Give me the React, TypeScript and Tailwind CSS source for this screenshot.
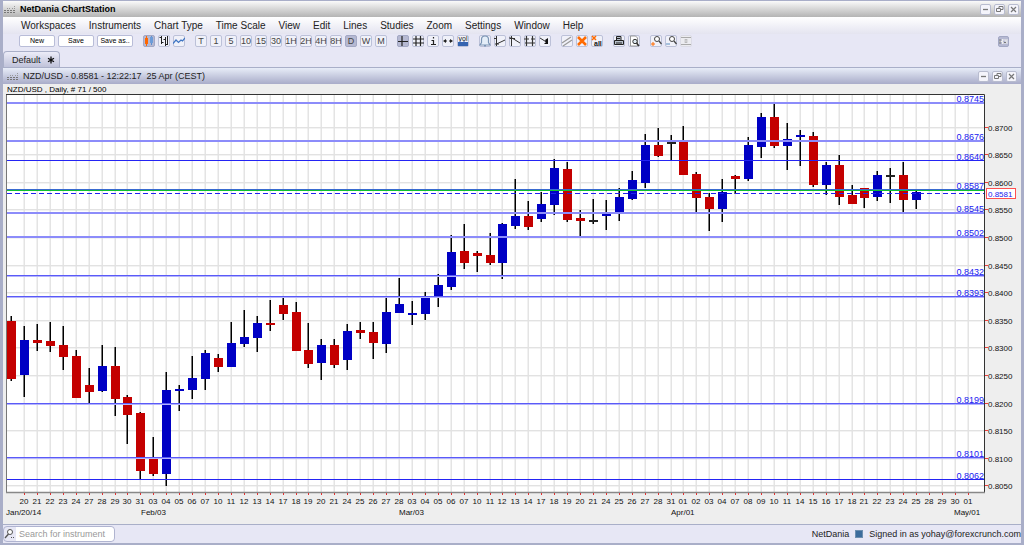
import React from "react";

type Kind = "r" | "b" | "k";
// kind, high, body top, body bottom, low (chart units)
type Candle = [Kind, number, number, number, number];

const candles: Candle[] = [
  ["r", 316, 321, 379, 381], ["b", 326, 340, 375, 397], ["r", 324, 340, 343, 351], ["r", 322, 341, 346, 352],
  ["r", 326, 345, 357, 370], ["r", 350, 356, 398, 398], ["r", 368, 385, 392, 405], ["b", 345, 366, 391, 392],
  ["r", 347, 366, 399, 416], ["r", 395, 397, 415, 444], ["r", 412, 413, 471, 479], ["r", 437, 457, 474, 476],
  ["b", 372, 390, 474, 486], ["b", 385, 389, 391, 411], ["b", 356, 378, 390, 399], ["b", 350, 353, 379, 390],
  ["r", 354, 358, 367, 372], ["b", 322, 343, 367, 367], ["b", 310, 337, 344, 347], ["b", 316, 323, 338, 352],
  ["r", 300, 323, 325, 331], ["r", 297, 305, 314, 320], ["r", 302, 312, 351, 351], ["r", 323, 350, 364, 368],
  ["b", 339, 345, 363, 380], ["r", 339, 345, 365, 368], ["b", 324, 331, 360, 370], ["r", 322, 330, 333, 339],
  ["r", 322, 332, 343, 359], ["b", 297, 312, 344, 353], ["b", 278, 304, 313, 313], ["b", 301, 313, 315, 325],
  ["b", 292, 296, 314, 320], ["b", 274, 285, 298, 307], ["b", 235, 252, 287, 290], ["r", 224, 251, 263, 269],
  ["r", 251, 253, 256, 272], ["r", 233, 255, 263, 265], ["b", 223, 224, 263, 279], ["b", 179, 216, 226, 229],
  ["r", 201, 216, 227, 230], ["b", 192, 204, 219, 222], ["b", 159, 168, 205, 215], ["r", 162, 169, 220, 222],
  ["r", 210, 218, 221, 238], ["k", 199, 220, 222, 224], ["b", 200, 213, 216, 230], ["b", 188, 197, 214, 221],
  ["b", 171, 180, 199, 200], ["b", 134, 145, 183, 188], ["r", 128, 145, 156, 157], ["k", 135, 142, 144, 160],
  ["r", 126, 142, 175, 175], ["r", 172, 174, 198, 213], ["r", 193, 197, 209, 231], ["b", 179, 192, 209, 222],
  ["r", 175, 176, 179, 194], ["b", 137, 145, 179, 181], ["b", 113, 117, 147, 158], ["r", 102, 117, 146, 148],
  ["b", 123, 139, 146, 170], ["b", 130, 135, 137, 166], ["r", 132, 136, 185, 187], ["b", 162, 165, 185, 195],
  ["r", 155, 165, 197, 205], ["r", 185, 195, 204, 204], ["r", 188, 188, 198, 208], ["b", 171, 175, 197, 201],
  ["k", 168, 175, 177, 203], ["r", 162, 175, 200, 213], ["b", 190, 192, 200, 209],
];

const days =
  "20 21 22 23 24 27 28 29 30 31 03 04 05 06 07 10 11 12 13 14 17 18 19 20 21 24 25 26 27 28 03 04 05 06 07 10 11 12 13 14 17 18 19 20 21 24 25 26 27 28 31 01 02 03 04 07 08 09 10 11 14 15 16 17 18 21 22 23 24 25 28 29 30 01".split(
    " ",
  );

const ticks = [8700, 8650, 8600, 8550, 8500, 8450, 8400, 8350, 8300, 8250, 8200, 8150, 8100, 8050];
// price and how the line is weighted over its two pixel rows
const levels: [number, "wide" | "mid" | "thin"][] = [
  [8745, "wide"], [8676, "wide"], [8640, "thin"], [8587, "mid"], [8545, "wide"], [8502, "wide"],
  [8432, "mid"], [8393, "mid"], [8199, "mid"], [8101, "mid"], [8062, "thin"],
];
const weights = {
  wide: ["#8c8cfa", "#8c8cfa"],
  mid: ["#5a5af8", "#b4b4fc"],
  thin: ["#2424f4", "none"],
};
const months: [number, string][] = [[6, "Jan/20/14"], [141, "Feb/03"], [399, "Mar/03"], [671, "Apr/01"], [954, "May/01"]];

const fills = { r: "#c40000", b: "#0000c4", k: "#222222" };
const xAt = (i: number) => Math.round(11.1 + i * 12.93);
const yAt = (p: number) => 127.5 + (8700 - p) * 0.5523;
const lineY = (p: number) => Math.floor(yAt(p) - 0.5);
const price = (p: number) => "0." + p;

function Chart() {
  return (
    <svg viewBox="3 94 1018 430" className="block h-auto w-full font-['Liberation_Sans',Arial,sans-serif]" role="img" aria-label="NZD/USD daily candlestick chart">
      <rect x="7" y="94" width="978" height="399" fill="#fff" />
      {days.map((_, i) => (
        <rect key={i} x={xAt(i + 1) - 0.5} y="95" width="1.5" height="398" fill="#e4e4e4" />
      ))}
      {ticks.map((p) => (
        <rect key={p} x="7" y={Math.round(yAt(p)) - 1} width="977" height="1.4" fill="#e2e2e2" />
      ))}
      {candles.map(([k, h, t, b, l], i) => (
        <g key={i}>
          <rect x={xAt(i) - 0.5} y={h} width="1.5" height={l - h} fill="#000" />
          <rect x={i ? xAt(i) - 4 : 7} y={t} width="9" height={b - t} fill={fills[k]} />
        </g>
      ))}
      {levels.map(([p, w]) => (
        <g key={p}>
          <rect x="7" y={lineY(p)} width="977" height="1" fill={weights[w][0]} />
          <rect x="7" y={lineY(p) + 1} width="977" height="1" fill={weights[w][1]} />
          <text x="984" y={lineY(p)} textAnchor="end" fontSize="9" fill="#2020f0">{price(p)}</text>
        </g>
      ))}
      <rect x="7" y="189" width="977" height="1" fill="#3a6ad0" />
      <rect x="7" y="190" width="977" height="1" fill="#10c030" />
      <path d="M7 193.5H984" stroke="#2020f0" strokeDasharray="5 3" />
      <path d="M6.5 94V493" stroke="#777" />
      <path d="M6 94.5H984.5V493" fill="none" stroke="#333" />
      <path d="M6 492.5H985" stroke="#888" strokeWidth="1.5" />
      {ticks.map((p) => (
        <g key={p}>
          <rect x="985" y={Math.round(yAt(p)) - 1} width="3" height="1" fill="#f04040" />
          <text x="988" y={Math.round(yAt(p)) + 3} fontSize="8" fill="#111">{price(p)}</text>
        </g>
      ))}
      <rect x="986.5" y="188.500" width="29" height="10" fill="#fff" stroke="#ff5050" />
      <text x="988" y="197" fontSize="8" fill="#2020f0">0.8581</text>
      {days.map((d, i) => (
        <g key={i}>
          <rect x={xAt(i + 1)} y="493" width="1" height="2" fill="#e03030" />
          <text x={xAt(i + 1)} y="504" textAnchor="middle" fontSize="8" fill="#111">{d}</text>
        </g>
      ))}
      {months.map(([x, m]) => (
        <text key={m} x={x} y="515" fontSize="8" fill="#111">{m}</text>
      ))}
    </svg>
  );
}

type IconDef = { label: string; art: React.ReactNode; on?: boolean; dim?: boolean };

const K = "#333";
const chartTypes: IconDef[] = [
  { label: "Candles", on: true, art: <><path d="M3.5 1v10" stroke="#f60" /><path d="M2 3h3v6H2z" fill="#f60" /><path d="M8.5 1v9" stroke="#5b8fd0" /><path d="M7 2h3v6H7z" fill="#6d9cd8" /></> },
  { label: "Bars", art: <path d="M3.5 1v8M1.5 2.5h2M3.5 7.5h2M7.5 2v9M5.5 4.5h2M7.5 9.5h2M9.500 1v9" stroke="#222" fill="none" /> },
  { label: "Line", art: <path d="M0 8.500L3 5l2.500 2.500L8 5l1.500 1L12 3" stroke="#3f76c4" strokeWidth="1.200" fill="none" /> },
];
const frames = ["T", "1", "5", "10", "15", "30", "1H", "2H", "4H", "8H", "D", "W", "M"];
const view: IconDef[] = [
  { label: "Crosshair", on: true, art: <path d="M5 1v10M1 6.500h10" stroke="#222" strokeWidth="1.200" /> },
  { label: "Grid", art: <path d="M4 1v10M8.500 1v10M1 4h11M1 8h11" stroke="#222" strokeWidth="1.200" /> },
  { label: "Info", art: <path d="M6.500 2v1.500M4.500 5.500h2V9.500M4 9.500h5" stroke="#222" strokeWidth="1.200" fill="none" /> },
  { label: "Expand", art: <path d="M1 6l3-2v1.500h1v1H4V8zM11 6L8 4v1.500H7v1h1V8z" fill="#222" /> },
  { label: "Volume", art: <><rect x="1" y="7" width="10" height="4" fill="#3564b0" /><path d="M3 7V6M5 8V7M7 7V6" stroke="#3564b0" /><text x="6" y="6" fontSize="7" textAnchor="middle" fill="#111">vol</text></> },
];
const draw: IconDef[] = [
  { label: "Alert", art: <path d="M1 10h10L9.500 7.500V4.500Q9.500 1 6 1T2.500 4.500v3zM5 11h2" stroke="#7a94b4" strokeWidth="1.200" fill="#e4eef8" /> },
  { label: "Trend up", art: <path d="M2.500 1v10M0 3.500h2.500M2.500 9L11 5M1 9h4" stroke={K} fill="none" /> },
  { label: "Trend down", art: <path d="M2.500 1v10M0 3h3L11 8M1 3.500h5" stroke={K} fill="none" /> },
  { label: "Channel", art: <path d="M2.500 1v10M8.500 1v10M0 4h5M1 8h10M7 4h4" stroke={K} strokeWidth="1.200" /> },
  { label: "Arrow", art: <><path d="M1 3l8 5" stroke={K} /><path d="M9 3v6H5l2-2-1-2z" fill="#111" /></> },
];
const lines: IconDef[] = [
  { label: "Parallel lines", art: <path d="M1 8L10 2M2 11l9-6" stroke="#999" strokeWidth="1.200" /> },
  { label: "Delete line", art: <path d="M2 2l8 8M10 2L2 10" stroke="#ff6a00" strokeWidth="2.500" /> },
  { label: "Delete all", art: <><path d="M1 1l4 4M5 1L1 5" stroke="#ff6a00" strokeWidth="1.500" /><text x="3" y="11" fontSize="7" fontWeight="bold" fill="#111">all</text></> },
];
const print: IconDef[] = [
  { label: "Print", art: <path d="M3.500 5V1.500h4.500V5M1.500 5.500h9v4h-9zM3 8h6M4 3.500h3" stroke="#222" fill="#b9c2cc" /> },
  { label: "Print preview", art: <><path d="M2.500 1h5l2 2v8h-7z" fill="#fff" stroke="#999" /><circle cx="7" cy="6.500" r="2.200" fill="#dde8f0" stroke="#333" /><path d="M8.500 8L11 11" stroke="#333" strokeWidth="1.500" /></> },
];
const zooms: IconDef[] = [
  { label: "Zoom in", art: <><circle cx="7" cy="4" r="2.500" fill="#fff" stroke="#444" /><path d="M9 6l2.500 3" stroke="#444" strokeWidth="1.300" /><path d="M1 9h4M3 7v4" stroke="#ff6a00" /></> },
  { label: "Zoom out", art: <><circle cx="7" cy="4" r="2.500" fill="#fff" stroke="#444" /><path d="M9 6l2.500 3" stroke="#444" strokeWidth="1.300" /><path d="M1 9h4" stroke="#5c8fc0" /></> },
  { label: "Fit height", dim: true, art: <path d="M1 2.500h10M1 9.500h10M6 4v1M6 7v1M4.500 5h3M4.500 7h3" stroke="#aaa" fill="none" /> },
];

function IconGroup({ items }: { items: IconDef[] }) {
  return (
    <div className="flex gap-[3px]">
      {items.map((it) => (
        <button
          key={it.label}
          type="button"
          aria-label={it.label}
          className={
            "flex size-3 items-center justify-center rounded-xs border " +
            (it.on ? "border-[#a3a8c4] bg-[#b6b9d2]" : it.dim ? "border-[#dcdce6] bg-[#ececf0]" : "border-[#bcc1d8] bg-[#f0f1f9]")
          }
        >
          <svg viewBox="0 0 12 12" className="size-3 shrink-0">{it.art}</svg>
        </button>
      ))}
    </div>
  );
}

const boxes = [
  { label: "Minimize", art: <path d="M3 5.500h5" stroke="#777" strokeWidth="1.300" /> },
  { label: "Restore", art: <path d="M5 4.500V2.500h4v3H7M2.500 4.500h4v3h-4z" stroke="#777" fill="none" /> },
  { label: "Close", art: <path d="M3 3l5 5M8 3L3 8" stroke="#777" strokeWidth="1.200" /> },
];

function WindowButtons({ name }: { name: string }) {
  return (
    <div className="flex gap-[3px]">
      {boxes.map((b) => (
        <button key={b.label} type="button" aria-label={`${b.label} ${name}`} className="size-[11px] rounded-xs border border-[#b8bccf] bg-[#f4f4fb]">
          <svg viewBox="1 1 9 9" className="size-[9px]">{b.art}</svg>
        </button>
      ))}
    </div>
  );
}

function Grip() {
  return (
    <svg viewBox="0 0 12 10" className="h-2.5 w-3 shrink-0" aria-hidden="true">
      <path d="M0 8.500h12M0 6.500h12" stroke="#777" strokeDasharray="2 1" />
      <path d="M3 4.500h3M8 4.500h4M10 2.500h2" stroke="#999" strokeDasharray="1 1" />
    </svg>
  );
}

const menus = ["Workspaces", "Instruments", "Chart Type", "Time Scale", "View", "Edit", "Lines", "Studies", "Zoom", "Settings", "Window", "Help"];

export default function App() {
  return (
    <div className="flex min-h-screen flex-col border-x-[3px] border-t border-b-2 border-[#a9aec8] bg-[#e7e7f5] font-['Liberation_Sans',Arial,sans-serif] text-[9px] leading-3 text-[#222]">
      <header className="flex h-4 items-center justify-between bg-linear-to-b from-[#fafafa] to-[#b4b4b4] pr-0.5 pl-px">
        <h1 className="flex items-center gap-1 font-bold text-black"><Grip />NetDania ChartStation</h1>
        <WindowButtons name="application" />
      </header>
      <nav className="flex h-[17px] items-center gap-[13px] bg-linear-to-b from-white to-[#e4e4f0] pl-[18px] text-[10px]">
        {menus.map((m) => (
          <button key={m} type="button">{m}</button>
        ))}
      </nav>
      <div className="flex items-center justify-between pt-px pr-3 pl-4">
        <div className="flex items-center gap-2.5">
          <div className="flex gap-[3px] text-[7px]">
            {["New", "Save", "Save as.."].map((b) => (
              <button key={b} type="button" className="flex h-3 w-9 items-center justify-center rounded-xs border border-[#b9bdd8] bg-white whitespace-nowrap text-black">{b}</button>
            ))}
          </div>
          <IconGroup items={chartTypes} />
          <div className="flex gap-[3px]">
            {frames.map((f) => (
              <button
                key={f}
                type="button"
                className={"flex size-3 items-center justify-center rounded-xs border text-[#444] " + (f === "D" ? "border-[#a3a8c4] bg-[#b6b9d2]" : "border-[#bcc1d8] bg-[#f0f1f9]")}
              >
                {f}
              </button>
            ))}
          </div>
          <IconGroup items={view} />
          <IconGroup items={draw} />
          <IconGroup items={lines} />
          <IconGroup items={print} />
          <IconGroup items={zooms} />
        </div>
        <button type="button" aria-label="Dock toolbar" className="size-[11px] rounded-xs border border-[#a3a8c4] bg-[#b6b9d2]">
          <svg viewBox="0 0 9 9" className="size-[9px]"><path d="M0 4.500h3M3.500 2v5M4 3h3v3H4M8 2v5" stroke="#eee" fill="none" /><path d="M1 2v5M5 5.500h2" stroke="#777" /></svg>
        </button>
      </div>
      <div className="flex border-b border-[#a9afc8] pt-1">
        <button type="button" className="flex h-4 items-center gap-1.5 rounded-t-sm border border-b-0 border-[#a9afc8] bg-linear-to-b from-[#ececf8] to-[#c0c3da] pr-1 pl-2">
          Default
          <svg viewBox="0 0 8 8" className="size-2"><path d="M4 .5v7M1 2.200l6 3.600M7 2.200L1 5.800" stroke="#111" strokeWidth="1.300" /></svg>
        </button>
      </div>
      <main className="flex flex-1 flex-col bg-[#eeeeee]">
        <div className="flex h-4 items-center justify-between bg-linear-to-b from-[#e8edf8] to-[#a9acc9] pr-1 pl-1">
          <h2 className="flex items-center gap-1 whitespace-pre"><Grip />{"NZD/USD - 0.8581 - 12:22:17  25 Apr (CEST)"}</h2>
          <WindowButtons name="chart" />
        </div>
        <p className="h-2.5 pl-1 text-[8px] leading-[11px] whitespace-pre text-black">NZD/USD , Daily, # 71 / 500</p>
        <Chart />
      </main>
      <footer className="flex h-[19px] items-center justify-between border-t border-[#a9afc8]">
        <label className="flex h-4 w-28 items-center rounded-sm border border-[#b0b4d0] bg-[#e7e7f5]">
          <svg viewBox="0 0 12 12" className="size-3 shrink-0" aria-hidden="true"><circle cx="6" cy="4" r="2.500" fill="#fff" stroke="#555" /><path d="M4.500 6L1 10" stroke="#555" strokeWidth="1.300" /><path d="M7 9.500h4" stroke="#555" strokeDasharray="1 1" /></svg>
          <input type="text" aria-label="Search for instrument" placeholder="Search for instrument" className="h-full min-w-0 flex-1 rounded-r-sm bg-white pl-[3px] outline-none placeholder:text-[#999]" />
        </label>
        <div className="flex items-center gap-1.5">
          <span>NetDania</span>
          <span className="size-2 border border-[#6d8fb0] bg-[#3c6c9c]" />
          <span>Signed in as yohay@forexcrunch.com</span>
        </div>
      </footer>
    </div>
  );
}
